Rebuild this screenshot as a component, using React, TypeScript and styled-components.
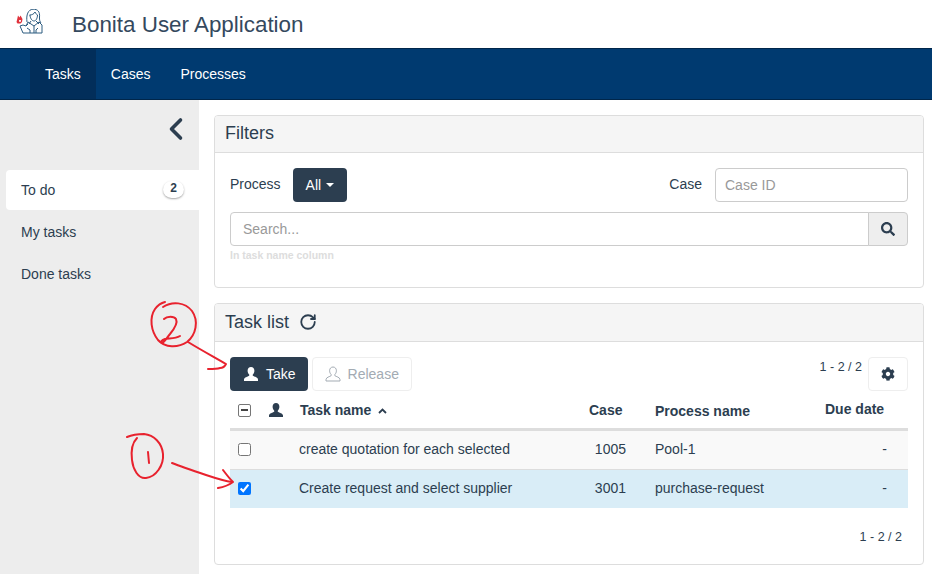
import styled, { createGlobalStyle } from "styled-components";
import { ChevronLeft, RotateCw } from "lucide-react";
import { FaCog, FaSearch } from "react-icons/fa";

const GlobalStyle = createGlobalStyle`
  html, body {
    margin: 0;
    padding: 0;
    height: 100%;
    background: #fff;
    color: #2c3e50;
    font-family: "Liberation Sans", Arial, sans-serif;
    font-size: 14px;
  }
  * { box-sizing: border-box; }
`;

const Page = styled.div`
  position: relative;
  width: 932px;
  height: 574px;
  overflow: hidden;
  display: flex;
  flex-direction: column;
`;

const Header = styled.header`
  height: 48px;
  display: flex;
  align-items: center;
  padding-left: 15px;
  gap: 27px;
`;

const Title = styled.h1`
  margin: 2px 0 0;
  font-size: 22.4px;
  font-weight: 400;
  color: #34495e;
`;

const Nav = styled.nav`
  height: 52px;
  display: flex;
  padding-left: 30px;
  background: #003a70;
  border-top: 1px solid #00264a;
  border-bottom: 1px solid #00264a;
`;

const NavItem = styled.a<{ $active?: boolean }>`
  display: flex;
  align-items: center;
  padding: 0 15px;
  color: #fff;
  background: ${(p) => (p.$active ? "#022e5a" : "transparent")};
`;

const Body = styled.div`
  flex: 1;
  display: flex;
`;

const Sidebar = styled.aside`
  width: 199px;
  background: #ededed;
  padding: 11px 0 0 6px;
  display: flex;
  flex-direction: column;
`;

const Collapse = styled.div`
  align-self: flex-end;
  height: 59px;
  padding-right: 5px;
  color: #2c3e50;
  line-height: 0;
`;

const SideItem = styled.a<{ $active?: boolean }>`
  height: 40px;
  margin-bottom: 2px;
  padding: 0 15px;
  display: flex;
  align-items: center;
  justify-content: space-between;
  border-radius: 4px 0 0 4px;
  background: ${(p) => (p.$active ? "#fff" : "transparent")};
`;

const Badge = styled.span`
  width: 21px;
  height: 17px;
  margin-bottom: 2px;
  border-radius: 10px;
  background: #fff;
  box-shadow: 0 1px 2px rgba(0, 0, 0, 0.35);
  font-size: 12px;
  font-weight: 700;
  text-align: center;
  line-height: 15px;
`;

const Main = styled.main`
  flex: 1;
  padding: 15px 8px 0 15px;
  display: flex;
  flex-direction: column;
  gap: 15px;
`;

const Panel = styled.section<{ $height: number }>`
  height: ${(p) => p.$height}px;
  border: 1px solid #ddd;
  border-radius: 4px;
`;

const PanelHeading = styled.div<{ $height: number; $lift: number }>`
  height: ${(p) => p.$height}px;
  padding: 0 10px ${(p) => p.$lift}px;
  display: flex;
  align-items: center;
  gap: 10px;
  background: #f5f5f5;
  border-bottom: 1px solid #ddd;
  border-radius: 3px 3px 0 0;
  font-size: 18px;
`;

const PanelBody = styled.div`
  padding: 15px 15px 0;
`;

const FilterRow = styled.div`
  display: flex;
  align-items: center;
`;

const Label = styled.span<{ $gap: number }>`
  margin-right: ${(p) => p.$gap}px;
  padding-bottom: 3px;
`;

const DarkButton = styled.button`
  height: 34px;
  padding: 0 13px;
  border: 0;
  border-radius: 4px;
  background: #2c3e50;
  color: #fff;
  font: inherit;
  display: inline-flex;
  align-items: center;
  gap: 5px;
`;

const Caret = styled.span`
  width: 0;
  height: 0;
  border-top: 4px solid #fff;
  border-left: 4px solid transparent;
  border-right: 4px solid transparent;
`;

const Spacer = styled.div`
  flex: 1;
`;

const TextInput = styled.input<{ $width?: number }>`
  height: 34px;
  width: ${(p) => (p.$width ? `${p.$width}px` : "100%")};
  padding: 0 9px;
  border: 1px solid #ccc;
  border-radius: 4px;
  font: inherit;
  &::placeholder { color: #999; }
`;

const SearchGroup = styled.div`
  display: flex;
  margin-top: 10px;
`;

const SearchInput = styled(TextInput)`
  flex: 1;
  padding: 0 12px;
  border-radius: 4px 0 0 4px;
`;

const SearchAddon = styled.div`
  width: 40px;
  height: 34px;
  margin-left: -1px;
  display: flex;
  align-items: center;
  justify-content: center;
  background: #eee;
  border: 1px solid #ccc;
  border-radius: 0 4px 4px 0;
  font-size: 14px;
`;

const HelpText = styled.div`
  margin-top: 2px;
  font-size: 10.5px;
  font-weight: 700;
  line-height: 14px;
  color: #ddd;
`;

const Toolbar = styled.div`
  display: flex;
  align-items: flex-start;
  gap: 4px;
`;

const ActionButton = styled(DarkButton)`
  gap: 7px;
  padding: 0 12px 0 13px;
`;

const GhostButton = styled.button`
  height: 34px;
  padding: 0 12px;
  display: inline-flex;
  align-items: center;
  gap: 7px;
  border: 1px solid #eee;
  border-radius: 4px;
  background: #fff;
  color: #a3abb3;
  font: inherit;
`;

const Pager = styled.span`
  margin: 2px 2px 0 0;
  font-size: 12.5px;
  line-height: 16px;
`;

const IconButton = styled.button`
  width: 40px;
  height: 34px;
  padding: 0;
  display: inline-flex;
  align-items: center;
  justify-content: center;
  border: 1px solid #eee;
  border-radius: 4px;
  background: #fff;
  color: #2c3e50;
  font-size: 14px;
`;

const Row = styled.div<{ $kind: "head" | "odd" | "selected" }>`
  display: grid;
  grid-template-columns: 38px 31px 290px 66px 170px 1fr;
  align-items: center;
  height: ${(p) => (p.$kind === "selected" ? 38 : 39)}px;
  margin-top: ${(p) => (p.$kind === "head" ? 1 : 0)}px;
  padding-bottom: ${(p) => (p.$kind === "head" ? 0 : 2)}px;
  background: ${(p) =>
    p.$kind === "selected" ? "#d9edf7" : p.$kind === "odd" ? "#f9f9f9" : "#fff"};
  border-bottom: ${(p) =>
    p.$kind === "head" ? "3px solid #ddd" : p.$kind === "odd" ? "1px solid #ddd" : "0"};
`;

const BoxCell = styled.div`
  padding-left: 8px;
  display: flex;
`;

const Check = styled.input`
  width: 13px;
  height: 13px;
  margin: 0;
`;

const MixedBox = styled.span`
  width: 13px;
  height: 13px;
  display: flex;
  align-items: center;
  justify-content: center;
  border: 1px solid #767676;
  border-radius: 2px;
  &::after {
    content: "";
    width: 7px;
    height: 2px;
    background: #444;
  }
`;

const HeadCell = styled.div<{ $shift?: number; $indent?: number }>`
  font-weight: 700;
  padding-bottom: ${(p) => (p.$shift && p.$shift > 0 ? p.$shift : 0)}px;
  padding-top: ${(p) => (p.$shift && p.$shift < 0 ? -p.$shift : 0)}px;
  padding-left: ${(p) => p.$indent ?? 0}px;
  display: flex;
  align-items: center;
  gap: 7px;
`;

const NumberCell = styled.div`
  padding: 0 29px 0 0;
  text-align: right;
`;

const DashCell = styled.div`
  padding-right: 21px;
  text-align: right;
`;

const SortArrow = styled.svg`
  margin-top: 3px;
`;

const TableFooter = styled.div`
  display: flex;
  justify-content: flex-end;
  padding: 22px 6px 0 0;
  font-size: 12.5px;
`;

const Annotations = styled.svg`
  position: absolute;
  left: 0;
  top: 0;
  pointer-events: none;
`;

function PersonIcon({ size, outline }: { size: number; outline?: boolean }) {
  const d =
    "M8 1C5.9 1 4.6 2.6 4.6 4.7c0 1.5.6 2.9 1.5 3.7.3.3.3 1 0 1.3C5 10.6 1 11.2 1 13.6V15h14v-1.4c0-2.4-4-3-5.1-3.9-.3-.3-.3-1 0-1.3.9-.8 1.5-2.2 1.5-3.7C11.4 2.6 10.1 1 8 1z";
  return (
    <svg width={size} height={size} viewBox="0 0 16 16" aria-hidden="true">
      <path
        d={d}
        fill={outline ? "none" : "currentColor"}
        stroke={outline ? "currentColor" : "none"}
        strokeWidth="1"
      />
    </svg>
  );
}

function Logo() {
  return (
    <svg width="30" height="30" viewBox="15 9 30 30" aria-hidden="true">
      <g fill="none" stroke="#2d5c80" strokeWidth="1">
        <path d="M27 22C26 15 28 9.500 33 9.200C38 9 40 12 39.500 17C39.300 20 40 22 41 23" />
        <path d="M29.500 15C32 15 34 14 35 12C36 14 37 15 38 15.500" />
        <path d="M30 15C30 18 32 21 34 21C36 21 37.500 18 37.500 15" />
        <path d="M28 22l6 4 5-4 3 3v8H23l-3-7 3-1 3 1z" />
        <path d="M34 26v7M27 28l3 2v3M38 28l-2 2v3M26 26l2-2M31 21l-2 3M36 21l3 3" />
      </g>
      <path d="M17 20l1-4.500 1.500 2 1-2 2 3.500-.5 3-1.500 1.500h-3l-1-1.500z" fill="#e0323c" />
      <path d="M19 20h2l-.4 2h-1.200z" fill="#fff" />
    </svg>
  );
}

export default function App() {
  return (
    <Page>
      <GlobalStyle />
      <Header>
        <Logo />
        <Title>Bonita User Application</Title>
      </Header>
      <Nav>
        <NavItem $active>Tasks</NavItem>
        <NavItem>Cases</NavItem>
        <NavItem>Processes</NavItem>
      </Nav>
      <Body>
        <Sidebar>
          <Collapse>
            <ChevronLeft size={36} strokeWidth={2.4} />
          </Collapse>
          <SideItem $active>
            To do <Badge>2</Badge>
          </SideItem>
          <SideItem>My tasks</SideItem>
          <SideItem>Done tasks</SideItem>
        </Sidebar>
        <Main>
          <Panel $height={173}>
            <PanelHeading $height={37} $lift={2}>Filters</PanelHeading>
            <PanelBody>
              <FilterRow>
                <Label $gap={12}>Process</Label>
                <DarkButton>
                  All <Caret />
                </DarkButton>
                <Spacer />
                <Label $gap={13}>Case</Label>
                <TextInput $width={193} placeholder="Case ID" />
              </FilterRow>
              <SearchGroup>
                <SearchInput placeholder="Search..." />
                <SearchAddon>
                  <FaSearch />
                </SearchAddon>
              </SearchGroup>
              <HelpText>In task name column</HelpText>
            </PanelBody>
          </Panel>
          <Panel $height={262}>
            <PanelHeading $height={38} $lift={1}>
              Task list <RotateCw size={18} strokeWidth={2.4} />
            </PanelHeading>
            <PanelBody>
              <Toolbar>
                <ActionButton>
                  <PersonIcon size={16} /> Take
                </ActionButton>
                <GhostButton>
                  <PersonIcon size={16} outline /> Release
                </GhostButton>
                <Spacer />
                <Pager>1 - 2 / 2</Pager>
                <IconButton>
                  <FaCog />
                </IconButton>
              </Toolbar>
              <Row $kind="head">
                <BoxCell>
                  <MixedBox />
                </BoxCell>
                <HeadCell $shift={1}>
                  <PersonIcon size={16} />
                </HeadCell>
                <HeadCell $indent={1} $shift={1}>
                  Task name
                  <SortArrow width="9" height="6" viewBox="0 0 9 6">
                    <path d="M1 5l3.500-3.500L8 5" fill="none" stroke="currentColor" strokeWidth="1.800" />
                  </SortArrow>
                </HeadCell>
                <HeadCell $shift={1}>Case</HeadCell>
                <HeadCell $shift={-1}>Process name</HeadCell>
                <HeadCell $shift={3}>Due date</HeadCell>
              </Row>
              <Row $kind="odd">
                <BoxCell>
                  <Check type="checkbox" readOnly />
                </BoxCell>
                <div />
                <div>create quotation for each selected</div>
                <NumberCell>1005</NumberCell>
                <div>Pool-1</div>
                <DashCell>-</DashCell>
              </Row>
              <Row $kind="selected">
                <BoxCell>
                  <Check type="checkbox" checked readOnly />
                </BoxCell>
                <div />
                <div>Create request and select supplier</div>
                <NumberCell>3001</NumberCell>
                <div>purchase-request</div>
                <DashCell>-</DashCell>
              </Row>
              <TableFooter>1 - 2 / 2</TableFooter>
            </PanelBody>
          </Panel>
        </Main>
      </Body>
      <Annotations width="932" height="574" viewBox="0 0 932 574">
        <g fill="none" stroke="#e8222e" strokeWidth="2" strokeLinecap="round" strokeLinejoin="round">
          <path d="M163 307c9-6 22-5 29 4 7 10 4 24-5 31-9 6-22 6-29-2-7-9-9-22-3-31 3-4 6-6 10-7" />
          <path d="M164 319c3-3 10-3 12 0 2 4-1 9-6 15-2 2-6 9-8 9-2-1 0-3 3-4 3-1 10 0 15-3" />
          <path d="M188 342c13 8 26 15 38 22-1 2-3 4-6 4-3 1-8 1-12 1" />
          <path d="M127 437c7-3 12-3 17-3 10 1 18 9 19 20 1 11-7 23-17 24-8 1-13-9-14-18-1-8 0-17 5-22" />
          <path d="M148 452l1 11" />
          <path d="M172 463c10 4 22 8 34 12 9 3 18 6 26 7" />
          <path d="M223 470c3 4 6 8 10 12-4 3-9 5-15 6" />
        </g>
      </Annotations>
    </Page>
  );
}
